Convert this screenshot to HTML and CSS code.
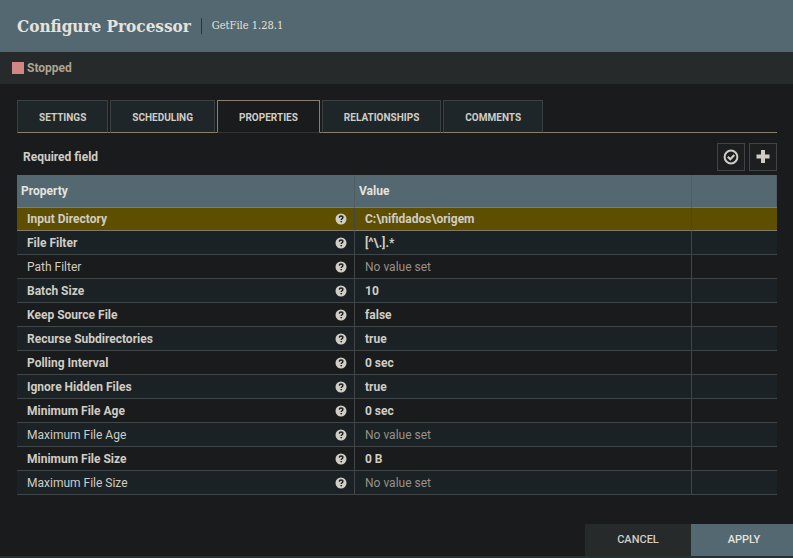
FILE: index.html
```
<!DOCTYPE html>
<html lang="en">
<head>
<meta charset="utf-8">
<title>Configure Processor</title>
<link rel="stylesheet" href="styles.css">
</head>
<body>
<svg class="sprite" aria-hidden="true">
  <symbol id="help" viewBox="0 0 12 12">
    <circle cx="6" cy="6" r="5.5" fill="#d0cdc5"/>
    <path d="M4.200 4.700C4.400 3.500 5.100 3 6 3c1.100 0 1.900.7 1.900 1.600C7.900 5.800 6.200 5.800 6.200 7" fill="none" stroke="#1a1b1c" stroke-width="1.400"/>
    <path d="M5.500 7.900h1.500v1.400H5.500z" fill="#1a1b1c"/>
  </symbol>
</svg>
<div class="dialog">
  <header class="dialog-header">
    <h1>Configure Processor</h1>
    <span class="subtitle">GetFile 1.28.1</span>
  </header>
  <div class="status"><span class="stopped-icon"></span>Stopped</div>
  <main class="content">
    <nav class="tabs" role="tablist">
      <button class="tab" role="tab">SETTINGS</button>
      <button class="tab" role="tab">SCHEDULING</button>
      <button class="tab selected" role="tab" aria-selected="true">PROPERTIES</button>
      <button class="tab" role="tab">RELATIONSHIPS</button>
      <button class="tab" role="tab">COMMENTS</button>
    </nav>
    <div class="toolbar">
      <span class="required">Required field</span>
      <button class="tool" aria-label="Verify properties"><svg width="16" height="16" viewBox="0 0 16 16"><circle cx="8" cy="8" r="6.400" fill="none" stroke="#d0cdc5" stroke-width="2"/><path d="M4.800 7.700l2.500 2.500 4-4.200" fill="none" stroke="#d0cdc5" stroke-width="2.200"/></svg></button>
      <button class="tool" aria-label="Add property"><svg width="16" height="16" viewBox="0 0 16 16"><path d="M6 1h4v4.500h4.500v4H10V14H6V9.500H1.500v-4H6z" fill="#d0cdc5"/></svg></button>
    </div>
    <table class="properties">
      <colgroup><col class="col-name"><col class="col-value"><col class="col-actions"></colgroup>
      <thead><tr><th scope="col">Property</th><th scope="col">Value</th><th></th></tr></thead>
      <tbody>
        <tr class="active"><td><div class="name">Input Directory<svg class="help"><use href="#help"/></svg></div></td><td>C:\nifidados\origem</td><td></td></tr>
        <tr><td><div class="name">File Filter<svg class="help"><use href="#help"/></svg></div></td><td>[^\.].*</td><td></td></tr>
        <tr class="optional"><td><div class="name">Path Filter<svg class="help"><use href="#help"/></svg></div></td><td>No value set</td><td></td></tr>
        <tr><td><div class="name">Batch Size<svg class="help"><use href="#help"/></svg></div></td><td>10</td><td></td></tr>
        <tr><td><div class="name">Keep Source File<svg class="help"><use href="#help"/></svg></div></td><td>false</td><td></td></tr>
        <tr><td><div class="name">Recurse Subdirectories<svg class="help"><use href="#help"/></svg></div></td><td>true</td><td></td></tr>
        <tr><td><div class="name">Polling Interval<svg class="help"><use href="#help"/></svg></div></td><td>0 sec</td><td></td></tr>
        <tr><td><div class="name">Ignore Hidden Files<svg class="help"><use href="#help"/></svg></div></td><td>true</td><td></td></tr>
        <tr><td><div class="name">Minimum File Age<svg class="help"><use href="#help"/></svg></div></td><td>0 sec</td><td></td></tr>
        <tr class="optional"><td><div class="name">Maximum File Age<svg class="help"><use href="#help"/></svg></div></td><td>No value set</td><td></td></tr>
        <tr><td><div class="name">Minimum File Size<svg class="help"><use href="#help"/></svg></div></td><td>0 B</td><td></td></tr>
        <tr class="optional"><td><div class="name">Maximum File Size<svg class="help"><use href="#help"/></svg></div></td><td>No value set</td><td></td></tr>
      </tbody>
    </table>
  </main>
  <footer class="actions">
    <button class="cancel">CANCEL</button>
    <button class="apply">APPLY</button>
  </footer>
</div>
</body>
</html>
```
FILE: styles.css
```
* { box-sizing: border-box; }
body { margin: 0; background: #1a1b1c; color: #d0cdc5; font: 12px/16px Roboto, "Liberation Sans", sans-serif; }
button { font: inherit; color: inherit; border: 0; border-radius: 0; padding: 0; cursor: pointer; }
.sprite { display: none; }
.dialog { min-height: 100vh; display: flex; flex-direction: column; border-bottom: 2px solid #263033; }
.dialog-header { display: flex; align-items: center; height: 52px; padding: 0 17px; background: #536871; color: #e6e3dc; font-family: "Roboto Slab", "DejaVu Serif Condensed", "DejaVu Serif", serif; }
h1 { margin: 0 10px 0 0; font-size: 17px; line-height: 24px; font-weight: 700; white-space: nowrap; }
.subtitle { padding-left: 10px; border-left: 1px solid #2c3638; font-size: 11px; white-space: nowrap; }
.status { display: flex; align-items: center; gap: 3px; height: 32px; padding: 0 12px; background: #262a2b; color: #aca392; font-weight: 700; }
.stopped-icon { width: 12px; height: 12px; background: #d18686; }
.content { flex: 1; padding: 16px 16px 0 17px; }
.tabs { display: flex; gap: 2px; border-bottom: 1px solid #8a7f69; }
.tab { height: 33px; margin-bottom: -1px; padding: 2px 21px 0; border: 1px solid #3b4042; border-bottom-color: #8a7f69; background: #1f2629; font-size: 10px; font-weight: 700; }
.tab.selected { border-color: #8a7f69; border-bottom-color: #343434; background: #1a1b1c; }
.toolbar { display: flex; align-items: center; gap: 4px; padding: 10px 0 4px; }
.required { flex: 1; padding-left: 6px; font-weight: 700; }
.tool { display: grid; place-items: center; width: 28px; height: 28px; border: 1px solid #404445; background: #1c1e20; }
.properties { width: 100%; table-layout: fixed; border-collapse: separate; border-spacing: 0; font-weight: 700; }
.col-name { width: 338px; }
.col-actions { width: 85px; }
th { height: 32px; padding: 0 4px; background: #536871; border-right: 1px solid #535c60; color: #e6e3dc; font-weight: 700; text-align: left; }
td { height: 24px; padding: 0 10px; border-right: 1px solid #414649; border-bottom: 1px solid #414649; }
td:last-child { border-right: 0; }
tbody tr:nth-child(even) { background: #1b2225; }
.optional { font-weight: 400; }
.optional td:nth-child(2) { color: #96928a; }
.active { background: #5e4f00; }
.active td { border-top: 1px solid #82796a; border-bottom-color: #82796a; }
.name { display: flex; align-items: center; justify-content: space-between; }
.help { width: 12px; height: 12px; margin-right: -3px; }
.actions { display: flex; justify-content: flex-end; }
.actions button { height: 32px; font-size: 11px; font-weight: 500; }
.actions .cancel { width: 106px; background: #262a2b; }
.actions .apply { width: 102px; padding-left: 4px; background: #536871; color: #e6e3dc; }
```
